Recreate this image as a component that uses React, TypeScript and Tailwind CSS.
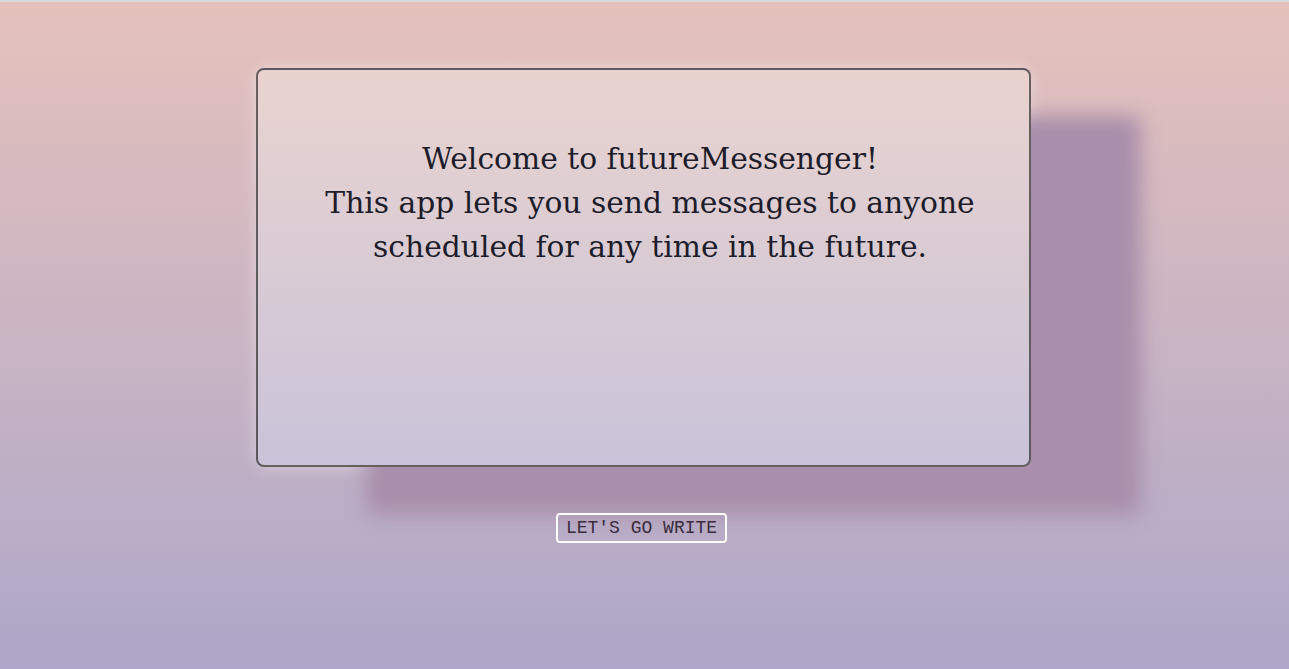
export default function App() {
  return (
    <div className="min-h-screen w-full border-t-2 border-[#d9d7e0] bg-gradient-to-b from-[#e5c1bb] to-[#aea7c9] flex flex-col items-center">
      <div
        className="mt-[66px] mr-[3px] w-[775px] h-[399px] rounded-lg border-2 border-black/55 bg-gradient-to-b from-[#e9d3cf] to-[#c9c3d9] pt-[67px] pl-[14px] shadow-[110px_48px_20px_#a98fab,0_0_16px_rgba(255,255,255,0.4)]"
        style={{ fontFamily: '"DejaVu Serif", serif' }}
      >
        <p className="text-center text-[29.75px] leading-[44px] text-[#1c1c2a]">
          Welcome to futureMessenger!
          <br />
          This app lets you send messages to anyone
          <br />
          scheduled for any time in the future.
        </p>
      </div>
      <button
        className="mt-[46px] mr-[6px] h-[30px] w-[171px] rounded-[4px] border-2 border-white bg-transparent text-[18px] leading-none text-[#3a2c3c]"
        style={{ fontFamily: '"Liberation Mono", monospace' }}
      >
        LET'S GO WRITE
      </button>
    </div>
  );
}
